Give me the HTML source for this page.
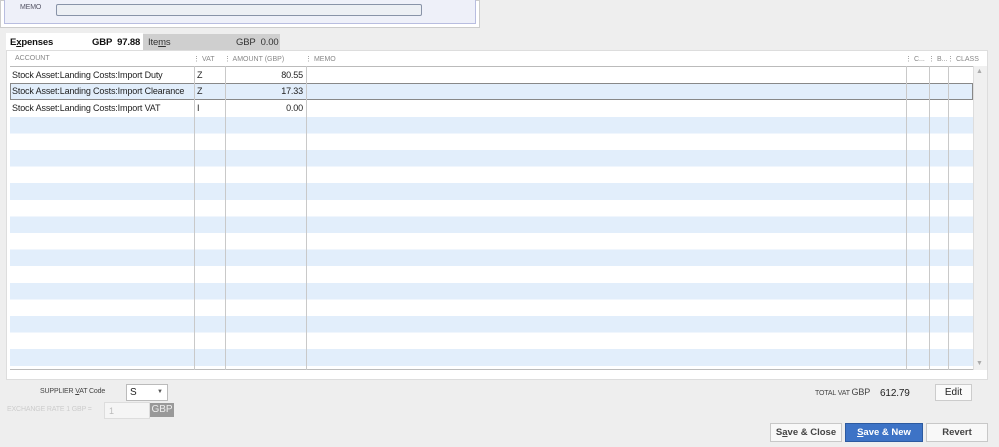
<!DOCTYPE html><html><head><style>
body{margin:0;width:999px;height:447px;background:#eeeeee;font-family:"Liberation Sans",sans-serif;position:relative;overflow:hidden;font-size:9px;color:#222}
.a{position:absolute}
.t{font-size:9px;white-space:nowrap;letter-spacing:-0.15px}
.btn{position:absolute;top:423px;height:19px;border:1px solid #c8c8c8;background:#f8f8f8;box-sizing:border-box;font-size:10px;font-weight:bold;color:#444;text-align:center;line-height:17px}
.cl{position:absolute;top:66px;height:304px;width:1px;background:#c9c9c9}
.hd{position:absolute;top:55px;font-size:7px;color:#888}
</style></head><body>
<div class="a" style="left:0;top:0;width:480px;height:28px;background:#fff;border:1px solid #ccc;box-sizing:border-box"></div>
<div class="a" style="left:4px;top:-2px;width:472px;height:26px;background:#eef0f9;border:1px solid #b8bde0;box-sizing:border-box"></div>
<div class="a t" style="left:20px;top:4px;font-size:7px;color:#556">MEMO</div>
<div class="a" style="left:56px;top:4px;width:366px;height:12px;background:#eceff4;border:1px solid #8893a8;border-radius:2px;box-sizing:border-box"></div>
<div class="a" style="left:6px;top:33px;width:137px;height:18px;background:#fff"></div>
<div class="a t" style="left:10px;top:37px;font-size:9.5px;color:#111;font-weight:bold">E<u>x</u>penses</div>
<div class="a t" style="left:92px;top:37px;font-size:9.5px;color:#111;font-weight:bold">GBP&nbsp; 97.88</div>
<div class="a" style="left:143px;top:34px;width:137px;height:16px;background:#cfcfcf"></div>
<div class="a t" style="left:148px;top:37px;font-size:9.5px;color:#333">Ite<u>m</u>s</div>
<div class="a t" style="left:236px;top:37px;font-size:9.5px;color:#333">GBP&nbsp; 0.00</div>
<div class="a" style="left:6px;top:50px;width:982px;height:330px;background:#fff;border:1px solid #ddd;box-sizing:border-box"></div>
<div class="a" style="left:10px;top:66px;width:963px;height:304px;background:repeating-linear-gradient(#fff 0,#fff 16.6px,#e2eefb 16.6px,#e2eefb 33.2px);border-top:1px solid #bbb;border-bottom:1px solid #bbb;box-sizing:border-box"></div>
<div class="a" style="left:10px;top:83px;width:963px;height:17px;border:1px solid #888;box-sizing:border-box"></div>
<div class="a" style="left:973px;top:66px;width:13px;height:304px;background:#f0f0f0;border-left:1px solid #ddd"></div>
<div class="a" style="left:976px;top:68px;font-size:7px;color:#aaa">▲</div>
<div class="a" style="left:976px;top:360px;font-size:7px;color:#aaa">▼</div>
<div class="cl" style="left:194px"></div><div class="cl" style="left:225px"></div><div class="cl" style="left:306px"></div><div class="cl" style="left:906px"></div><div class="cl" style="left:929px"></div><div class="cl" style="left:948px"></div>
<div class="hd" style="left:15px">ACCOUNT</div>
<div class="hd" style="left:193px">⋮ VAT</div>
<div class="hd" style="left:224px">⋮ AMOUNT (GBP)</div>
<div class="hd" style="left:305px">⋮ MEMO</div>
<div class="hd" style="left:905px">⋮ C...</div>
<div class="hd" style="left:928px">⋮ B...</div>
<div class="hd" style="left:947px">⋮ CLASS</div>
<div class="a t" style="left:12px;top:70px">Stock Asset:Landing Costs:Import Duty</div>
<div class="a t" style="left:12px;top:86px">Stock Asset:Landing Costs:Import Clearance</div>
<div class="a t" style="left:12px;top:103px">Stock Asset:Landing Costs:Import VAT</div>
<div class="a t" style="left:197px;top:70px">Z</div><div class="a t" style="left:197px;top:86px">Z</div><div class="a t" style="left:197px;top:103px">I</div>
<div class="a t" style="left:230px;top:70px;width:73px;text-align:right">80.55</div>
<div class="a t" style="left:230px;top:86px;width:73px;text-align:right">17.33</div>
<div class="a t" style="left:230px;top:103px;width:73px;text-align:right">0.00</div>
<div class="a t" style="left:40px;top:388px;font-size:7px;color:#444">SUPPLIER <u>V</u>AT Code</div>
<div class="a" style="left:126px;top:384px;width:42px;height:17px;background:#fff;border:1px solid #bbb;box-sizing:border-box;font-size:10px;padding:2px 0 0 3px">S<span style="position:absolute;left:30px;top:4px;font-size:6px;color:#555">▼</span></div>
<div class="a t" style="left:7px;top:406px;font-size:7px;color:#ccc">EXCHANGE RATE 1 GBP =</div>
<div class="a" style="left:104px;top:402px;width:46px;height:17px;background:#f5f5f5;border:1px solid #ddd;box-sizing:border-box;font-size:9px;color:#bbb;padding:3px 0 0 4px">1</div>
<div class="a" style="left:150px;top:403px;width:24px;height:14px;background:#999;color:#eee;font-size:10px;text-align:center;line-height:14px">GBP</div>
<div class="a t" style="left:815px;top:387px;font-size:7px;color:#444">TOTAL VAT <span style="font-size:9px">GBP</span></div>
<div class="a t" style="left:880px;top:388px;font-size:10px;color:#222">612.79</div>
<div class="a" style="left:935px;top:384px;width:37px;height:17px;background:#fafafa;border:1px solid #ccc;box-sizing:border-box;text-align:center;font-size:10px;line-height:15px">Edit</div>
<div class="btn" style="left:770px;width:72px;font-size:9.5px">S<u>a</u>ve &amp; Close</div>
<div class="btn" style="left:845px;width:78px;background:#3d73c6;border-color:#2c5aa0;color:#fff;font-size:9.5px"><u>S</u>ave &amp; New</div>
<div class="btn" style="left:926px;width:62px;font-size:9.5px">Revert</div>
</body></html>
